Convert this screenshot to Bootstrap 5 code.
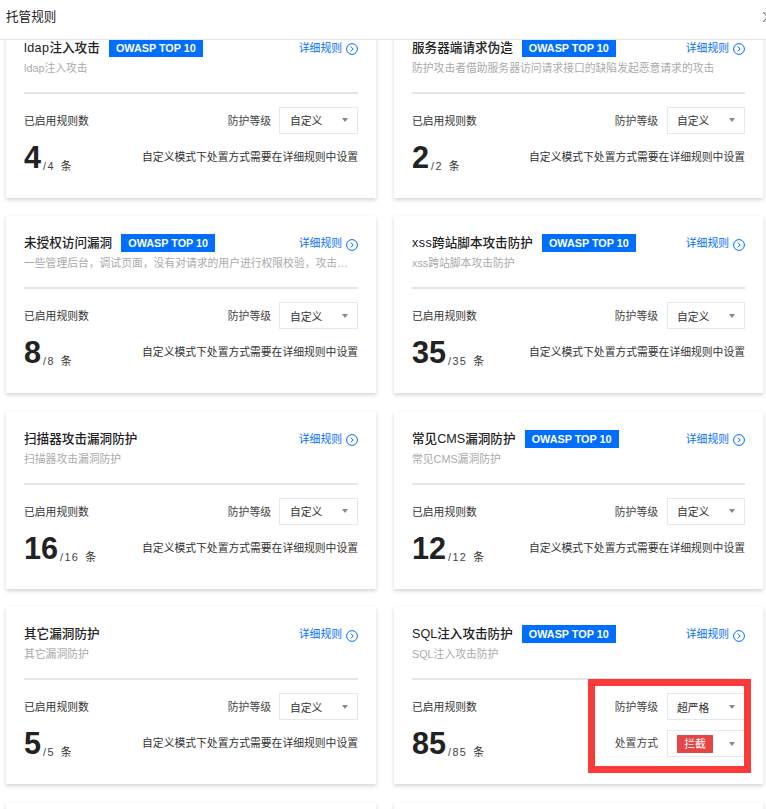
<!DOCTYPE html>
<html lang="zh-CN">
<head>
<meta charset="utf-8">
<title>托管规则</title>
<link href="https://cdn.jsdelivr.net/npm/bootstrap@5.3.0/dist/css/bootstrap.min.css" rel="stylesheet">
<style>
html,body{height:100%;overflow:hidden;background:#fff}
body{font-family:"Liberation Sans","Noto Sans CJK SC",sans-serif;font-size:10.8px;color:#333;position:relative}
.dlg-head{height:40px;border-bottom:1px solid #e5e5e5;padding-left:6px;padding-bottom:5px;font-size:12.6px;color:#222}
.dlg-close{margin-right:-7px;flex:none}
.dlg-scroll{height:769px;overflow:hidden}
.rule-grid{display:grid;grid-template-columns:370px 369px;column-gap:18px;row-gap:18.5px;padding-left:6px;margin-top:-19.5px}
.rule-card{height:177px;padding:18px 18px 0;border:0;border-radius:0;box-shadow:0 2px 4px rgba(54,58,80,.22)}
.title-row{height:18px;line-height:18px}
.rule-name{font-size:12.6px;color:#222;font-weight:500;margin-right:9px}
.lat{letter-spacing:.4px}
.owasp{height:18px;line-height:18px;width:94px;text-align:center;background:#006eff;color:#fff;font-weight:700;font-size:10.8px}
.more{color:#006eff;text-decoration:none;line-height:14px}
.more svg{margin-left:4px;margin-top:3px}
.rule-desc{color:#aaa;line-height:16px;margin-top:2px;height:17px;padding-top:1px;white-space:nowrap}
.rule-line{height:2px;background:#e5e5e5;margin-top:16px;margin-bottom:13px}
.stat-label{height:27px;line-height:28px;color:#333}
.stat-line{height:27px;margin-top:10px;line-height:27px;white-space:nowrap}
.big{font-size:30.6px;font-weight:700;color:#222;line-height:27px}
.small-of{letter-spacing:1.4px;color:#444;margin-left:2px;vertical-align:-2px}
.unit{margin-left:6px;color:#333;vertical-align:-2px}
.ctl-row{height:27px;gap:8px;color:#444}
.ctl-row+.ctl-row{margin-top:10px}
.ctl-l{padding-top:2px}
.ctl-row+.ctl-row .ctl-l{padding-top:0}
.note{height:27px;margin-top:10px;line-height:27px;color:#333;text-align:right}
.sel{width:79px;height:27px;border:1px solid #e5e8ee;padding:0 8px 0 10px;color:#333}
.sel-t{padding-top:3px}
.rule-card:nth-child(even) .sel{width:78px;padding-left:9px}
.rule-card:nth-child(even) .ctl-row{gap:9px}
.tri{width:0;height:0;margin-right:1px;border-left:3.5px solid transparent;border-right:3.5px solid transparent;border-top:4.5px solid #888}
.tag-red{width:36px;height:18px;line-height:18px;background:#e54545;color:#fff;text-align:center}
.mark-box{position:absolute;left:588px;top:679px;width:163px;height:94px;border:7px solid #fb3a3a}
</style>
</head>
<body>
<div class="dlg-head d-flex align-items-center justify-content-between">
  <span>托管规则</span>
  <svg class="dlg-close" width="10" height="10" viewBox="0 0 10 10" fill="none" stroke="#777" stroke-width="1.2"><path d="M0 0l10 10M10 0L0 10"/></svg>
</div>
<div class="dlg-scroll">
<div class="rule-grid">

<div class="card rule-card">
  <div class="title-row d-flex align-items-center"><span class="rule-name"><span class="lat">ldap</span>注入攻击</span><span class="owasp">OWASP TOP 10</span><a class="more ms-auto d-flex align-items-center" href="#">详细规则<svg width="12" height="12" viewBox="0 0 12 12" fill="none" stroke="#006eff"><circle cx="6" cy="6" r="5.4"/><path d="M4.8 3.6 7.2 6 4.8 8.4"/></svg></a></div>
  <div class="rule-desc">ldap注入攻击</div>
  <div class="rule-line"></div>
  <div class="d-flex justify-content-between">
    <div><div class="stat-label">已启用规则数</div><div class="stat-line"><span class="big">4</span><span class="small-of">/4</span><span class="unit">条</span></div></div>
    <div><div class="ctl-row d-flex align-items-center justify-content-end"><span class="ctl-l">防护等级</span><div class="sel d-flex align-items-center justify-content-between"><span class="sel-t">自定义</span><i class="tri"></i></div></div><div class="note">自定义模式下处置方式需要在详细规则中设置</div></div>
  </div>
</div>

<div class="card rule-card">
  <div class="title-row d-flex align-items-center"><span class="rule-name">服务器端请求伪造</span><span class="owasp">OWASP TOP 10</span><a class="more ms-auto d-flex align-items-center" href="#">详细规则<svg width="12" height="12" viewBox="0 0 12 12" fill="none" stroke="#006eff"><circle cx="6" cy="6" r="5.4"/><path d="M4.8 3.6 7.2 6 4.8 8.4"/></svg></a></div>
  <div class="rule-desc">防护攻击者借助服务器访问请求接口的缺陷发起恶意请求的攻击</div>
  <div class="rule-line"></div>
  <div class="d-flex justify-content-between">
    <div><div class="stat-label">已启用规则数</div><div class="stat-line"><span class="big">2</span><span class="small-of">/2</span><span class="unit">条</span></div></div>
    <div><div class="ctl-row d-flex align-items-center justify-content-end"><span class="ctl-l">防护等级</span><div class="sel d-flex align-items-center justify-content-between"><span class="sel-t">自定义</span><i class="tri"></i></div></div><div class="note">自定义模式下处置方式需要在详细规则中设置</div></div>
  </div>
</div>

<div class="card rule-card">
  <div class="title-row d-flex align-items-center"><span class="rule-name">未授权访问漏洞</span><span class="owasp">OWASP TOP 10</span><a class="more ms-auto d-flex align-items-center" href="#">详细规则<svg width="12" height="12" viewBox="0 0 12 12" fill="none" stroke="#006eff"><circle cx="6" cy="6" r="5.4"/><path d="M4.8 3.6 7.2 6 4.8 8.4"/></svg></a></div>
  <div class="rule-desc">一些管理后台，调试页面，没有对请求的用户进行权限校验，攻击…</div>
  <div class="rule-line"></div>
  <div class="d-flex justify-content-between">
    <div><div class="stat-label">已启用规则数</div><div class="stat-line"><span class="big">8</span><span class="small-of">/8</span><span class="unit">条</span></div></div>
    <div><div class="ctl-row d-flex align-items-center justify-content-end"><span class="ctl-l">防护等级</span><div class="sel d-flex align-items-center justify-content-between"><span class="sel-t">自定义</span><i class="tri"></i></div></div><div class="note">自定义模式下处置方式需要在详细规则中设置</div></div>
  </div>
</div>

<div class="card rule-card">
  <div class="title-row d-flex align-items-center"><span class="rule-name"><span class="lat">xss</span>跨站脚本攻击防护</span><span class="owasp">OWASP TOP 10</span><a class="more ms-auto d-flex align-items-center" href="#">详细规则<svg width="12" height="12" viewBox="0 0 12 12" fill="none" stroke="#006eff"><circle cx="6" cy="6" r="5.4"/><path d="M4.8 3.6 7.2 6 4.8 8.4"/></svg></a></div>
  <div class="rule-desc">xss跨站脚本攻击防护</div>
  <div class="rule-line"></div>
  <div class="d-flex justify-content-between">
    <div><div class="stat-label">已启用规则数</div><div class="stat-line"><span class="big">35</span><span class="small-of">/35</span><span class="unit">条</span></div></div>
    <div><div class="ctl-row d-flex align-items-center justify-content-end"><span class="ctl-l">防护等级</span><div class="sel d-flex align-items-center justify-content-between"><span class="sel-t">自定义</span><i class="tri"></i></div></div><div class="note">自定义模式下处置方式需要在详细规则中设置</div></div>
  </div>
</div>

<div class="card rule-card">
  <div class="title-row d-flex align-items-center"><span class="rule-name">扫描器攻击漏洞防护</span><a class="more ms-auto d-flex align-items-center" href="#">详细规则<svg width="12" height="12" viewBox="0 0 12 12" fill="none" stroke="#006eff"><circle cx="6" cy="6" r="5.4"/><path d="M4.8 3.6 7.2 6 4.8 8.4"/></svg></a></div>
  <div class="rule-desc">扫描器攻击漏洞防护</div>
  <div class="rule-line"></div>
  <div class="d-flex justify-content-between">
    <div><div class="stat-label">已启用规则数</div><div class="stat-line"><span class="big">16</span><span class="small-of">/16</span><span class="unit">条</span></div></div>
    <div><div class="ctl-row d-flex align-items-center justify-content-end"><span class="ctl-l">防护等级</span><div class="sel d-flex align-items-center justify-content-between"><span class="sel-t">自定义</span><i class="tri"></i></div></div><div class="note">自定义模式下处置方式需要在详细规则中设置</div></div>
  </div>
</div>

<div class="card rule-card">
  <div class="title-row d-flex align-items-center"><span class="rule-name">常见CMS漏洞防护</span><span class="owasp">OWASP TOP 10</span><a class="more ms-auto d-flex align-items-center" href="#">详细规则<svg width="12" height="12" viewBox="0 0 12 12" fill="none" stroke="#006eff"><circle cx="6" cy="6" r="5.4"/><path d="M4.8 3.6 7.2 6 4.8 8.4"/></svg></a></div>
  <div class="rule-desc">常见CMS漏洞防护</div>
  <div class="rule-line"></div>
  <div class="d-flex justify-content-between">
    <div><div class="stat-label">已启用规则数</div><div class="stat-line"><span class="big">12</span><span class="small-of">/12</span><span class="unit">条</span></div></div>
    <div><div class="ctl-row d-flex align-items-center justify-content-end"><span class="ctl-l">防护等级</span><div class="sel d-flex align-items-center justify-content-between"><span class="sel-t">自定义</span><i class="tri"></i></div></div><div class="note">自定义模式下处置方式需要在详细规则中设置</div></div>
  </div>
</div>

<div class="card rule-card">
  <div class="title-row d-flex align-items-center"><span class="rule-name">其它漏洞防护</span><a class="more ms-auto d-flex align-items-center" href="#">详细规则<svg width="12" height="12" viewBox="0 0 12 12" fill="none" stroke="#006eff"><circle cx="6" cy="6" r="5.4"/><path d="M4.8 3.6 7.2 6 4.8 8.4"/></svg></a></div>
  <div class="rule-desc">其它漏洞防护</div>
  <div class="rule-line"></div>
  <div class="d-flex justify-content-between">
    <div><div class="stat-label">已启用规则数</div><div class="stat-line"><span class="big">5</span><span class="small-of">/5</span><span class="unit">条</span></div></div>
    <div><div class="ctl-row d-flex align-items-center justify-content-end"><span class="ctl-l">防护等级</span><div class="sel d-flex align-items-center justify-content-between"><span class="sel-t">自定义</span><i class="tri"></i></div></div><div class="note">自定义模式下处置方式需要在详细规则中设置</div></div>
  </div>
</div>

<div class="card rule-card">
  <div class="title-row d-flex align-items-center"><span class="rule-name">SQL注入攻击防护</span><span class="owasp">OWASP TOP 10</span><a class="more ms-auto d-flex align-items-center" href="#">详细规则<svg width="12" height="12" viewBox="0 0 12 12" fill="none" stroke="#006eff"><circle cx="6" cy="6" r="5.4"/><path d="M4.8 3.6 7.2 6 4.8 8.4"/></svg></a></div>
  <div class="rule-desc">SQL注入攻击防护</div>
  <div class="rule-line"></div>
  <div class="d-flex justify-content-between">
    <div><div class="stat-label">已启用规则数</div><div class="stat-line"><span class="big">85</span><span class="small-of">/85</span><span class="unit">条</span></div></div>
    <div><div class="ctl-row d-flex align-items-center justify-content-end"><span class="ctl-l">防护等级</span><div class="sel d-flex align-items-center justify-content-between"><span class="sel-t">超严格</span><i class="tri"></i></div></div><div class="ctl-row d-flex align-items-center justify-content-end"><span class="ctl-l">处置方式</span><div class="sel d-flex align-items-center justify-content-between"><span class="tag-red">拦截</span><i class="tri"></i></div></div></div>
  </div>
</div>

<div class="card rule-card"></div>
<div class="card rule-card"></div>
</div>
</div>
<div class="mark-box"></div>
</body>
</html>
